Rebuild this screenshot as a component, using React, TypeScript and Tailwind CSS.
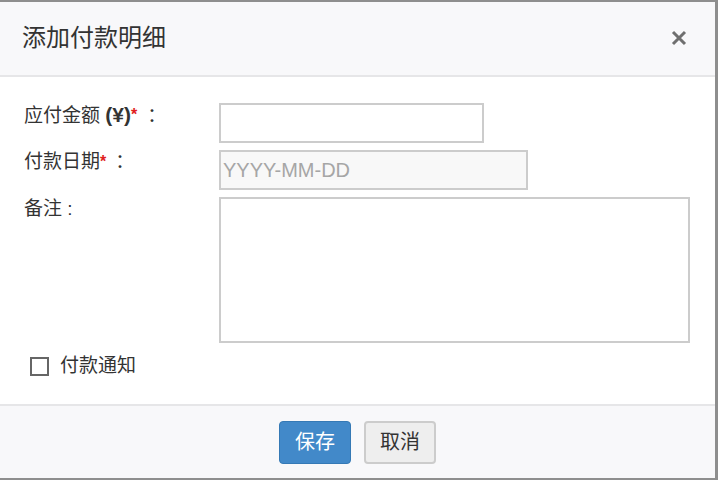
export default function App() {
  const cjk = { fontFamily: '"Liberation Sans", "Noto Sans CJK SC", sans-serif' };

  return (
    <div className="w-[718px] h-[480px] overflow-hidden bg-[#8e8e8e] pt-[2px]" style={cjk}>
      <div className="w-[715px] h-[476px] bg-white flex flex-col text-[#333]">
        {/* header */}
        <div className="h-[75px] shrink-0 bg-[#f8f8fa] border-b-2 border-[#e6e6e8] flex items-center justify-between pl-[22px] pr-[28px]">
          <h4 className="text-[24px] leading-none font-normal text-[#333] -mt-[2px]">添加付款明细</h4>
          <button className="w-[16px] h-[16px] flex items-center justify-center -mt-[1px]">
            <svg viewBox="0 0 16 16" className="w-[16px] h-[16px]" fill="none" stroke="#6f6f6f" strokeWidth="3" strokeLinecap="butt">
              <path d="M2 2l12 12M14 2L2 14" />
            </svg>
          </button>
        </div>

        {/* body */}
        <div className="flex-1 pt-[26px] pl-[24px]">
          <div className="flex items-start">
            <label className="w-[195px] shrink-0 text-[19px] leading-[24px]">
              应付金额 <b className="font-bold text-[21px]">(¥)</b>
              <span className="text-[#e02020] text-[16px] font-bold align-top">*</span>
              <span className="ml-[10px]">：</span>
            </label>
            <input className="w-[265px] h-[40px] border-2 border-[#cccccc] bg-white px-[3px] outline-none" />
          </div>

          <div className="flex items-start mt-[7px]">
            <label className="w-[195px] shrink-0 text-[19px] leading-[24px]">
              付款日期
              <span className="text-[#e02020] text-[16px] font-bold align-top">*</span>
              <span className="ml-[9px]">：</span>
            </label>
            <input
              placeholder="YYYY-MM-DD"
              className="w-[309px] h-[40px] border-2 border-[#cccccc] bg-[#f8f8f8] pl-[2px] text-[20px] placeholder:text-[#a6a6a6] outline-none"
              style={{ fontFamily: '"Liberation Sans", Arial, sans-serif' }}
            />
          </div>

          <div className="flex items-start mt-[7px]">
            <label className="w-[195px] shrink-0 text-[19px] leading-[24px]">
              备注 :
            </label>
            <textarea className="w-[471px] h-[146px] border-2 border-[#cccccc] bg-white resize-none outline-none" />
          </div>

          <label className="flex items-center mt-[11px] ml-[6px] gap-[11px]">
            <span className="w-[19px] h-[19px] border-2 border-[#666] bg-white shrink-0" />
            <span className="text-[19px] leading-[24px]">付款通知</span>
          </label>
        </div>

        {/* footer */}
        <div className="h-[74px] shrink-0 bg-[#f8f8fa] border-t-2 border-[#e6e6e8] flex items-center justify-center gap-[13px]">
          <button className="w-[72px] h-[43px] rounded-[4px] bg-[#4289c9] border border-[#3579b5] text-white text-[20px]">
            保存
          </button>
          <button className="w-[72px] h-[43px] rounded-[4px] bg-[#eeeeee] border-2 border-[#cccccc] text-[#333] text-[20px]">
            取消
          </button>
        </div>
      </div>
    </div>
  );
}
